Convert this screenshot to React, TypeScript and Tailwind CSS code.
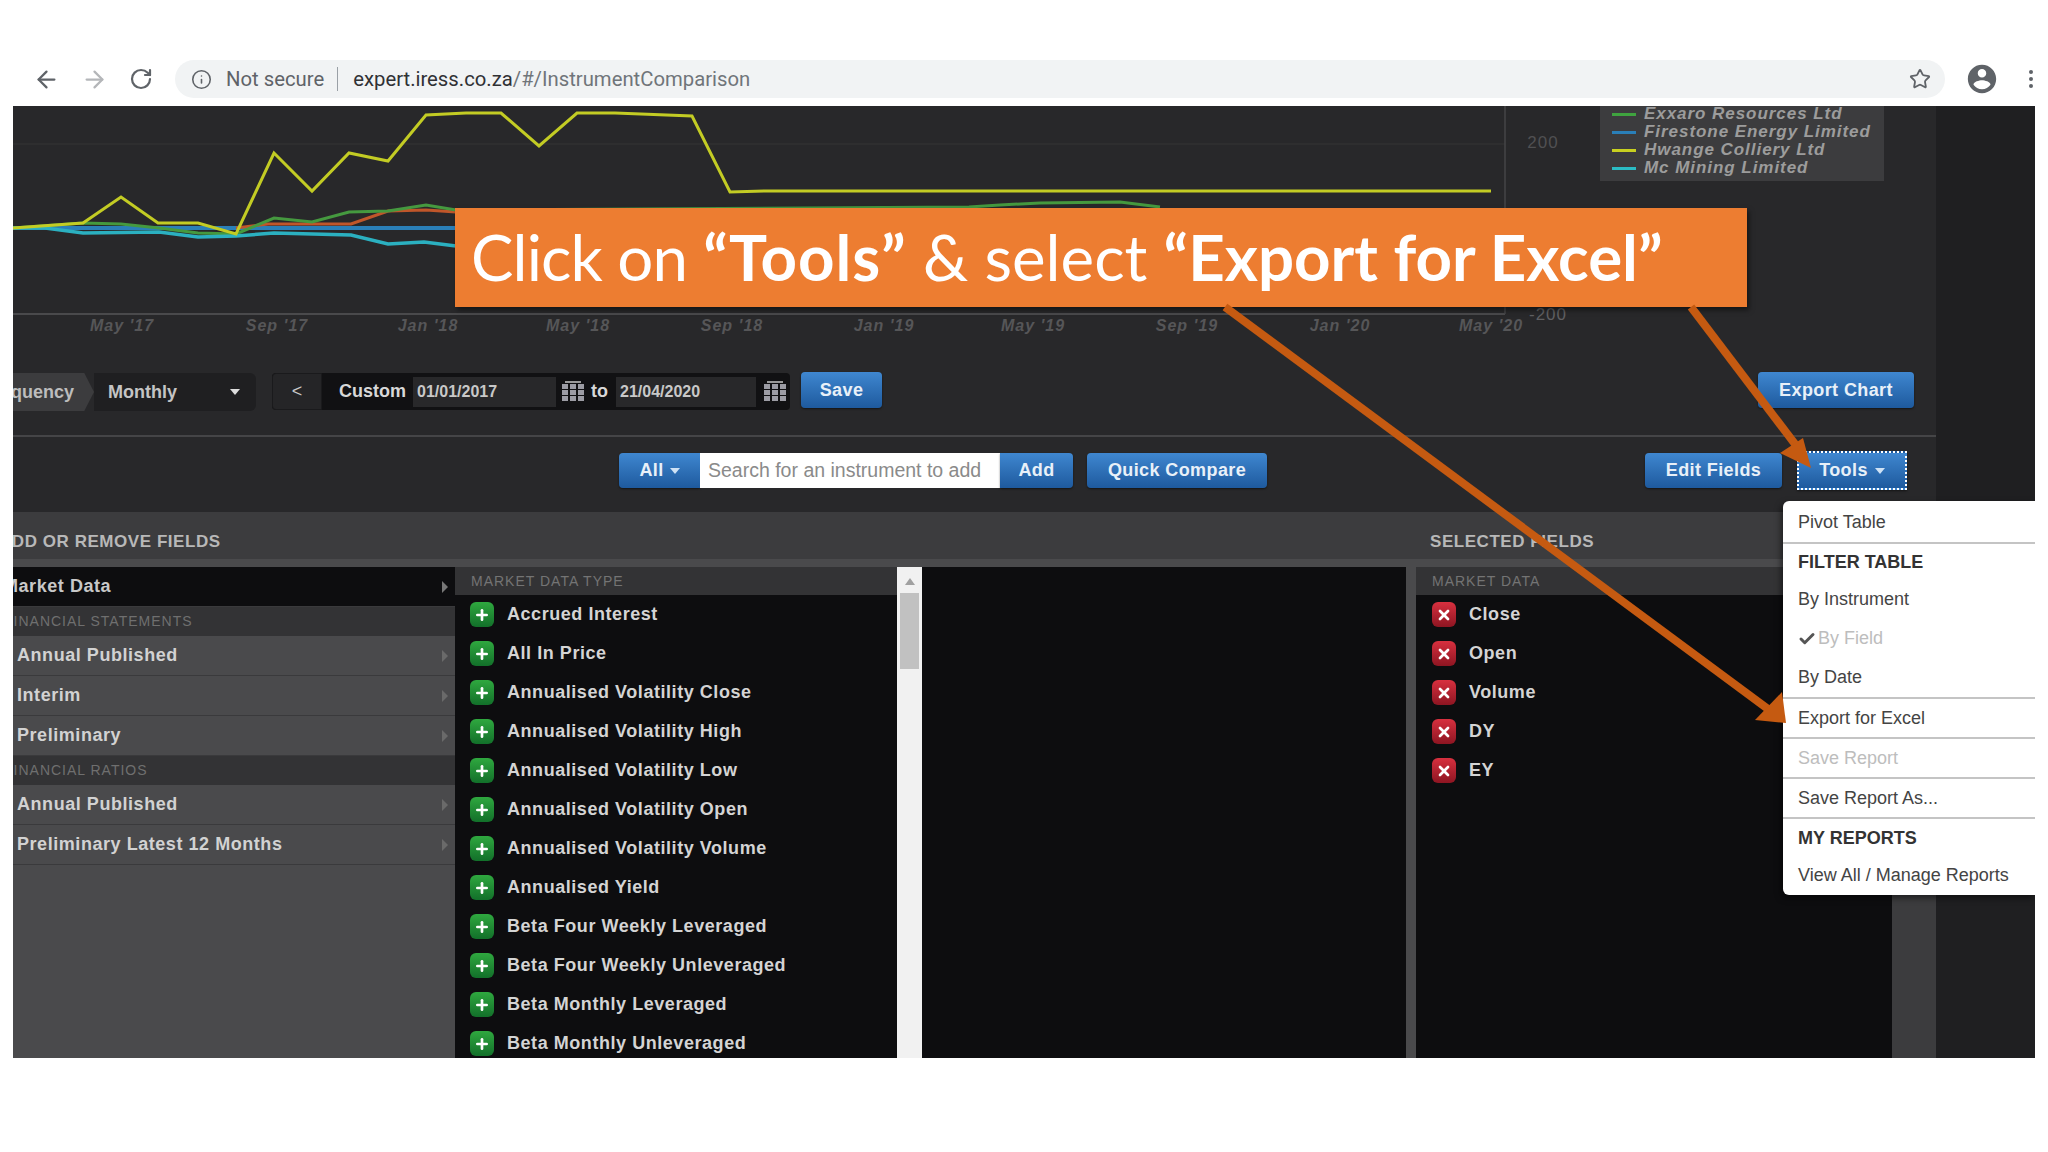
import { ArrowLeft, ArrowRight, RotateCw, Info, Star, Plus, X, Check } from 'lucide-react';

const marketFields = [
  'Accrued Interest',
  'All In Price',
  'Annualised Volatility Close',
  'Annualised Volatility High',
  'Annualised Volatility Low',
  'Annualised Volatility Open',
  'Annualised Volatility Volume',
  'Annualised Yield',
  'Beta Four Weekly Leveraged',
  'Beta Four Weekly Unleveraged',
  'Beta Monthly Leveraged',
  'Beta Monthly Unleveraged',
];

const selectedFields = ['Close', 'Open', 'Volume', 'DY', 'EY'];

const xLabels: [number, string][] = [
  [122, "May '17"],
  [277, "Sep '17"],
  [428, "Jan '18"],
  [578, "May '18"],
  [732, "Sep '18"],
  [884, "Jan '19"],
  [1033, "May '19"],
  [1187, "Sep '19"],
  [1340, "Jan '20"],
  [1491, "May '20"],
];

const legend = [
  { name: 'Exxaro Resources Ltd', color: 'bg-[#3fa33f]' },
  { name: 'Firestone Energy Limited', color: 'bg-[#2a7fb8]' },
  { name: 'Hwange Colliery Ltd', color: 'bg-[#c8d020]' },
  { name: 'Mc Mining Limited', color: 'bg-[#2bbcc4]' },
];

const blueBtn =
  'flex items-center justify-center bg-linear-to-b from-[#3f87d0] to-[#1e5a9e] text-[#e8f0f8] text-[18px] font-bold tracking-[0.4px] rounded-[4px] shadow-[0_1px_2px_#00000080]';

const NavRow = ({ label, active }: { label: string; active?: boolean }) => (
  <div
    className={`h-[40px] flex items-center justify-between pl-[4px] pr-[7px] border-b border-[#3a3a3c] text-[18px] font-bold tracking-[0.55px] ${
      active ? 'bg-[#0d0d0f] text-[#c8c8c8]' : 'bg-[#4a4a4c] text-[#d2d2d2]'
    }`}
  >
    <span className={active ? '-ml-[14px]' : ''}>{label}</span>
    <span
      className={`w-0 h-0 border-y-[6px] border-y-transparent border-l-[6px] ${
        active ? 'border-l-[#777]' : 'border-l-[#6a6a6a]'
      }`}
    />
  </div>
);

const NavSection = ({ label }: { label: string }) => (
  <div className="h-[29px] flex items-center bg-[#333335] text-[14px] tracking-[1px] text-[#6f6f6f] -ml-[9px]">
    {label}
  </div>
);

const FieldRow = ({ label, remove }: { label: string; remove?: boolean }) => (
  <div className="h-[39px] flex items-center gap-[13px]">
    <span
      className={`w-[24px] h-[25px] rounded-[6px] flex items-center justify-center bg-linear-to-b ${
        remove ? 'from-[#d8303f] to-[#8e1522]' : 'from-[#2fa83f] to-[#12702a]'
      }`}
    >
      {remove ? (
        <X size={16} strokeWidth={4} className="text-white" />
      ) : (
        <Plus size={16} strokeWidth={4} className="text-white" />
      )}
    </span>
    <span className="text-[18px] font-bold tracking-[0.55px] text-[#d4d4d4]">{label}</span>
  </div>
);

const Calendar = () => (
  <svg width="22" height="22" viewBox="0 0 22 22" className="shrink-0">
    <rect x="3" y="0" width="16" height="2" fill="#9a9a9a" />
    {[3, 9, 15].map(y =>
      [0, 8, 16].map(x => <rect key={`${x}-${y}`} x={x} y={y} width="6" height="5" fill="#9c9ca4" />)
    )}
  </svg>
);

const MenuItem = ({ children, muted, className }: { children: React.ReactNode; muted?: boolean; className: string }) => (
  <div className={`flex items-center pl-[15px] ${className} ${muted ? 'text-[#bdbdbd]' : 'text-[#444]'}`}>
    {children}
  </div>
);

const App = () => {
  return (
    <div className="relative w-[2048px] h-[1152px] bg-white overflow-hidden font-['Liberation_Sans',sans-serif]">
      {/* Browser bar */}
      <div className="pt-[60px] h-[106px] flex items-start bg-white">
        <div className="w-[175px] h-[38px] flex items-center pl-[33px] gap-[21px] text-[#5f6368]">
          <ArrowLeft size={27} strokeWidth={2} />
          <ArrowRight size={27} strokeWidth={2} className="text-[#b4b6b9]" />
          <RotateCw size={24} strokeWidth={2.2} />
        </div>
        <div className="w-[1770px] h-[38px] rounded-full bg-[#f1f3f4] flex items-center pl-[16px] pr-[14px] text-[20.3px] font-['Roboto',sans-serif]">
          <Info size={21} strokeWidth={1.8} className="text-[#5f6368]" />
          <span className="ml-[14px] text-[#5f6368]">Not secure</span>
          <span className="mx-[13px] w-px h-[24px] bg-[#9aa0a6]" />
          <span className="ml-[2px] text-[#303134]">expert.iress.co.za</span>
          <span className="text-[#70757a]">/#/InstrumentComparison</span>
          <Star size={22} strokeWidth={2} className="ml-auto text-[#5f6368]" />
        </div>
        <div className="flex-1 h-[38px] flex items-center pl-[20px] gap-[30px]">
          <svg width="34" height="34" viewBox="0 0 24 24" fill="#5f6368" className="shrink-0">
            <path d="M12 2C6.48 2 2 6.48 2 12s4.48 10 10 10 10-4.48 10-10S17.52 2 12 2zm0 3c1.66 0 3 1.34 3 3s-1.34 3-3 3-3-1.34-3-3 1.34-3 3-3zm0 14.2c-2.5 0-4.71-1.28-6-3.22.03-1.99 4-3.08 6-3.08 1.99 0 5.97 1.09 6 3.08-1.29 1.94-3.5 3.22-6 3.22z" />
          </svg>
          <div className="flex flex-col gap-[3px]">
            <span className="w-[4px] h-[4px] rounded-full bg-[#5f6368]" />
            <span className="w-[4px] h-[4px] rounded-full bg-[#5f6368]" />
            <span className="w-[4px] h-[4px] rounded-full bg-[#5f6368]" />
          </div>
        </div>
      </div>

      {/* App */}
      <div className="relative ml-[13px] w-[2022px] h-[952px] flex overflow-hidden bg-[#1f1f21]">
        <div className="w-[1923px] shrink-0 bg-[#28282a] flex flex-col">
          {/* Chart */}
          <div className="relative h-[254px] shrink-0">
            <svg width="1923" height="254" viewBox="13 106 1923 254" fill="none" className="block">
              <path d="M13 144H1505" stroke="#303032" strokeWidth="1.5" />
              <path d="M13 314H1505" stroke="#4a4a4c" strokeWidth="2" />
              <path d="M1505 106V314" stroke="#454547" strokeWidth="1.5" />
              <polyline points="13,228 456,228" stroke="#2a7fb8" strokeWidth="4" />
              <polyline points="236,228 268,224 351,224 388,211 426,210 456,212" stroke="#c0562a" strokeWidth="3" />
              <polyline
                points="13,228 83,223 121,224 159,228 198,233 236,234 274,218 312,222 349,212 388,211 426,205 456,210 969,207 1000,205 1040,203 1120,202 1160,207"
                stroke="#45993f"
                strokeWidth="3"
              />
              <polyline
                points="13,228 45,228 83,233 159,232 198,237 236,236 274,233 351,235 388,244 424,242 456,246"
                stroke="#2bb0c0"
                strokeWidth="3.5"
              />
              <polyline
                points="13,228 83,223 121,197 158,223 198,223 236,234 274,153 312,191 349,153 388,161 426,115 466,113 501,113 539,146 577,113 615,113 692,116 730,192 765,191 1491,191"
                stroke="#c3cc24"
                strokeWidth="3"
              />
              {xLabels.map(([x, label]) => (
                <text key={label} x={x} y="331" textAnchor="middle" fontSize="16" fontStyle="italic" fontWeight="700" letterSpacing="1" fill="#565658">
                  {label}
                </text>
              ))}
              <text x="1543" y="148" textAnchor="middle" fontSize="17" letterSpacing="1" fill="#505052">200</text>
              <text x="1548" y="320" textAnchor="middle" fontSize="17" letterSpacing="1" fill="#606062">-200</text>
            </svg>
            <div className="absolute left-[1587px] top-0 w-[284px] h-[75px] bg-[#3c3c3e] flex flex-col gap-[2px] pl-[12px]">
              {legend.map(item => (
                <div key={item.name} className="h-[16px] flex items-center gap-[8px]">
                  <span className={`w-[24px] h-[3px] ${item.color}`} />
                  <span className="text-[17px] leading-[16px] font-bold italic tracking-[0.95px] text-[#9c9c9c]">{item.name}</span>
                </div>
              ))}
            </div>
          </div>

          {/* Frequency and date range */}
          <div className="h-[77px] shrink-0 border-b-2 border-[#454547] pt-[13px] pr-[22px] flex items-start">
            <div className="w-[81px] h-[38px] flex items-center justify-end pr-[20px] overflow-hidden bg-[#3c3c3e] text-[18px] font-bold text-[#bdbdbd] [clip-path:polygon(0_0,88%_0,100%_50%,88%_100%,0_100%)]">
              <span className="shrink-0">Frequency</span>
            </div>
            <div className="w-[162px] h-[38px] flex items-center justify-between pl-[14px] pr-[16px] bg-[#1f1f21] rounded-r-[6px] text-[18px] font-bold text-[#c4c4c4]">
              Monthly
              <span className="w-0 h-0 border-x-[5px] border-x-transparent border-t-[6px] border-t-[#ddd]" />
            </div>
            <div className="ml-[16px] h-[37px] w-[518px] flex items-center bg-[#111113] rounded-[4px] text-[18px] font-bold text-[#d8d8d8]">
              <div className="w-[50px] h-full flex items-center justify-center bg-[#252527] border border-[#1a1a1c] rounded-l-[4px] text-[#c8c8c8] font-normal">&lt;</div>
              <span className="ml-[17px]">Custom</span>
              <span className="ml-[7px] w-[143px] h-[30px] flex items-center pl-[4px] bg-[#28282a] text-[16px] text-[#c8c8c8]">01/01/2017</span>
              <span className="ml-[6px]"><Calendar /></span>
              <span className="ml-[7px]">to</span>
              <span className="ml-[8px] w-[140px] h-[30px] flex items-center pl-[4px] bg-[#28282a] text-[16px] text-[#c8c8c8]">21/04/2020</span>
              <span className="ml-[8px]"><Calendar /></span>
            </div>
            <button className={`${blueBtn} ml-[11px] -mt-px w-[81px] h-[36px]`}>Save</button>
            <button className={`${blueBtn} ml-auto -mt-px w-[156px] h-[36px]`}>Export Chart</button>
          </div>

          {/* Search row */}
          <div className="h-[75px] shrink-0 pt-[16px] pl-[606px] flex items-start">
            <button className={`${blueBtn} w-[81px] h-[35px] gap-[6px] rounded-r-none`}>
              All
              <span className="w-0 h-0 border-x-[5px] border-x-transparent border-t-[6px] border-t-[#cfe2f5]" />
            </button>
            <div className="w-[300px] h-[35px] bg-white flex items-center pl-[8px] text-[19.5px] whitespace-nowrap text-[#8a8a8a]">
              Search for an instrument to add
            </div>
            <button className={`${blueBtn} w-[73px] h-[35px] rounded-l-none`}>Add</button>
            <button className={`${blueBtn} ml-[14px] w-[180px] h-[35px]`}>Quick Compare</button>
            <button className={`${blueBtn} ml-[378px] w-[137px] h-[35px]`}>Edit Fields</button>
            <button className={`${blueBtn} ml-[15px] -mt-[2px] w-[110px] h-[39px] gap-[7px] rounded-none border-2 border-dotted border-white`}>
              Tools
              <span className="w-0 h-0 border-x-[5px] border-x-transparent border-t-[6px] border-t-[#cfe2f5]" />
            </button>
          </div>

          {/* Section titles */}
          <div className="h-[47px] shrink-0 bg-[#3c3c3e] flex items-center pt-[12px] text-[17px] font-bold tracking-[0.55px] text-[#b8b8b8]">
            <span className="-ml-[14px] w-[1431px]">ADD OR REMOVE FIELDS</span>
            <span>SELECTED FIELDS</span>
          </div>
          <div className="h-[8px] shrink-0 bg-[#4a4a4c]" />

          {/* Panels */}
          <div className="flex-1 min-h-0 flex">
            <div className="w-[442px] shrink-0 bg-[#4a4a4c] overflow-hidden">
              <NavRow label="Market Data" active />
              <NavSection label="FINANCIAL STATEMENTS" />
              <NavRow label="Annual Published" />
              <NavRow label="Interim" />
              <NavRow label="Preliminary" />
              <NavSection label="FINANCIAL RATIOS" />
              <NavRow label="Annual Published" />
              <NavRow label="Preliminary Latest 12 Months" />
            </div>
            <div className="w-[442px] shrink-0 bg-[#0d0d0f] overflow-hidden">
              <div className="h-[28px] flex items-center pl-[16px] bg-[#333335] text-[14px] tracking-[1px] text-[#747474]">MARKET DATA TYPE</div>
              <div className="pl-[15px]">
                {marketFields.map(field => (
                  <FieldRow key={field} label={field} />
                ))}
              </div>
            </div>
            <div className="w-[25px] shrink-0 bg-[#f1f1f1] flex flex-col items-center px-[3px]">
              <span className="mt-[11px] w-0 h-0 border-x-[5px] border-x-transparent border-b-[7px] border-b-[#a0a0a0]" />
              <span className="mt-[8px] w-[19px] h-[76px] bg-[#c1c1c1]" />
            </div>
            <div className="w-[484px] shrink-0 bg-[#0d0d0f]" />
            <div className="w-[10px] shrink-0 bg-[#4a4a4c]" />
            <div className="w-[476px] shrink-0 bg-[#0d0d0f]">
              <div className="h-[28px] flex items-center pl-[16px] bg-[#333335] text-[14px] tracking-[1px] text-[#747474]">MARKET DATA</div>
              <div className="pl-[16px]">
                {selectedFields.map(field => (
                  <FieldRow key={field} label={field} remove />
                ))}
              </div>
            </div>
            <div className="flex-1 bg-[#3c3c3e]" />
          </div>
        </div>
        <div className="flex-1" />

        {/* Tools menu */}
        <div className="absolute left-[1770px] top-[395px] w-[252px] h-[394px] bg-white rounded-l-[6px] shadow-[-2px_3px_6px_#00000080] text-[18px]">
          <div className="h-[43px] flex items-center pl-[15px] pt-[2px] text-[#444] border-b-2 border-[#c4c4c4]">Pivot Table</div>
          <MenuItem className="h-[36px]">
            <span className="font-bold text-[#333]">FILTER TABLE</span>
          </MenuItem>
          <MenuItem className="h-[39px]">By Instrument</MenuItem>
          <MenuItem muted className="h-[39px]">
            <Check size={18} strokeWidth={4} className="text-[#555] mr-[2px]" />
            By Field
          </MenuItem>
          <div className="border-b-2 border-[#c4c4c4]">
            <MenuItem className="h-[39px]">By Date</MenuItem>
          </div>
          <div className="border-b-2 border-[#c4c4c4]">
            <MenuItem className="h-[38px]">Export for Excel</MenuItem>
          </div>
          <div className="border-b-2 border-[#c4c4c4]">
            <MenuItem muted className="h-[38px]">Save Report</MenuItem>
          </div>
          <div className="border-b-2 border-[#c4c4c4]">
            <MenuItem className="h-[38px]">Save Report As...</MenuItem>
          </div>
          <MenuItem className="h-[38px]">
            <span className="font-bold text-[#333]">MY REPORTS</span>
          </MenuItem>
          <MenuItem className="h-[37px]">View All / Manage Reports</MenuItem>
        </div>
      </div>

      {/* Slide annotation */}
      <div className="absolute left-[455px] top-[208px] w-[1292px] h-[99px] bg-[#ed7d31] shadow-[2px_3px_5px_#00000080] flex items-center pl-[16px] pb-[2px] text-white text-[63.6px] font-['Lato',sans-serif]">
        <span>
          <span className="tracking-[-0.9px]">Click on</span> <b className="tracking-[1px]">“Tools”</b> &amp; select <b>“Export for Excel”</b>
        </span>
      </div>
      <svg width="2048" height="1152" viewBox="0 0 2048 1152" className="absolute left-0 top-0 pointer-events-none" fill="#c55a11">
        <path d="M1225 307L1768 709" stroke="#c55a11" strokeWidth="8" />
        <polygon points="1786,723 1755,720 1782,692" />
        <path d="M1691 307L1798 448" stroke="#c55a11" strokeWidth="8" />
        <polygon points="1811,468 1780,453 1803,438" />
      </svg>
    </div>
  );
};

export default App;
